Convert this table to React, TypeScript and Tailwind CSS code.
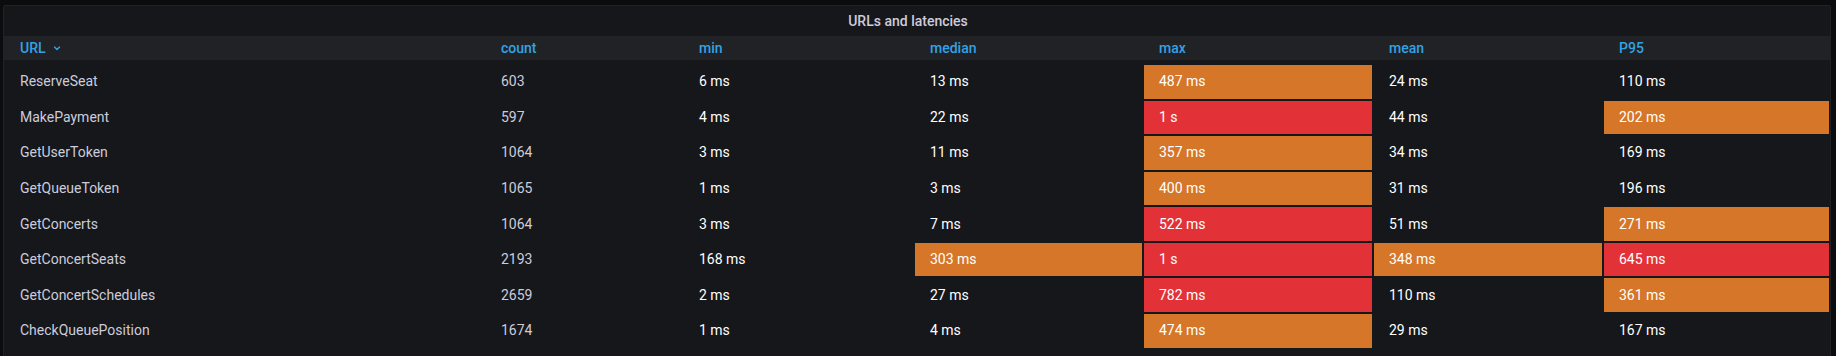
type Row = {
  url: string;
  count: number;
  min: number;
  median: number;
  max: number;
  mean: number;
  p95: number;
};

const rows: Row[] = [
  { url: 'ReserveSeat', count: 603, min: 6, median: 13, max: 487, mean: 24, p95: 110 },
  { url: 'MakePayment', count: 597, min: 4, median: 22, max: 1000, mean: 44, p95: 202 },
  { url: 'GetUserToken', count: 1064, min: 3, median: 11, max: 357, mean: 34, p95: 169 },
  { url: 'GetQueueToken', count: 1065, min: 1, median: 3, max: 400, mean: 31, p95: 196 },
  { url: 'GetConcerts', count: 1064, min: 3, median: 7, max: 522, mean: 51, p95: 271 },
  { url: 'GetConcertSeats', count: 2193, min: 168, median: 303, max: 1000, mean: 348, p95: 645 },
  { url: 'GetConcertSchedules', count: 2659, min: 2, median: 27, max: 782, mean: 110, p95: 361 },
  { url: 'CheckQueuePosition', count: 1674, min: 1, median: 4, max: 474, mean: 29, p95: 167 },
];

const grid = 'grid grid-cols-[481px_198px_231px_229px_230px_230px_227px]';

function fmt(ms: number): string {
  return ms >= 1000 ? `${Math.round(ms / 1000)} s` : `${ms} ms`;
}

// latency thresholds: P95 turns orange earlier than the others
function cellBg(ms: number, orangeAt: number): string {
  if (ms >= 500) return 'bg-[#e23237]';
  if (ms >= orangeAt) return 'bg-[#d67628]';
  return '';
}

function LatencyCell({ ms, orangeAt = 300 }: { ms: number; orangeAt?: number }) {
  return (
    <div className="p-[1px]">
      <div className={`flex h-full items-center pl-[15px] text-white ${cellBg(ms, orangeAt)}`}>
        {fmt(ms)}
      </div>
    </div>
  );
}

function PlainCell({ children }: { children: React.ReactNode }) {
  return (
    <div className="p-[1px]">
      <div className="flex h-full items-center pl-[15px] text-[#ccccdc]">{children}</div>
    </div>
  );
}

export default function App() {
  const headers = ['count', 'min', 'median', 'max', 'mean', 'P95'];

  return (
    <div className="h-[356px] w-[1836px] overflow-hidden bg-[#0b0c0e] pl-[3px] pt-[5px] font-['Roboto',sans-serif] text-[14px]">
      <div className="h-[360px] w-[1828px] rounded-[2px] border border-[#202226] bg-[#16171b]">
        <div className="flex h-[30px] items-center justify-center pr-[18px] text-[14px] font-medium text-[#ccccdc]">
          URLs and latencies
        </div>

        <div className={`${grid} h-[24px] bg-[#212226] font-medium text-[#33a2e5]`}>
          <div className="flex items-center gap-[6px] pl-[16px]">
            URL
            <svg width="10" height="10" viewBox="0 0 10 10" fill="none">
              <path d="M2.5 4L5 6.5L7.5 4" stroke="#33a2e5" strokeWidth="1.4" strokeLinecap="round" strokeLinejoin="round" />
            </svg>
          </div>
          {headers.map((h) => (
            <div key={h} className="flex items-center pl-[16px]">
              {h}
            </div>
          ))}
        </div>

        <div className="mt-[4px]">
          {rows.map((r) => (
            <div key={r.url} className={`${grid} h-[35.57px]`}>
              <PlainCell>{r.url}</PlainCell>
              <PlainCell>{r.count}</PlainCell>
              <LatencyCell ms={r.min} />
              <LatencyCell ms={r.median} />
              <LatencyCell ms={r.max} />
              <LatencyCell ms={r.mean} />
              <LatencyCell ms={r.p95} orangeAt={200} />
            </div>
          ))}
        </div>
      </div>
    </div>
  );
}
